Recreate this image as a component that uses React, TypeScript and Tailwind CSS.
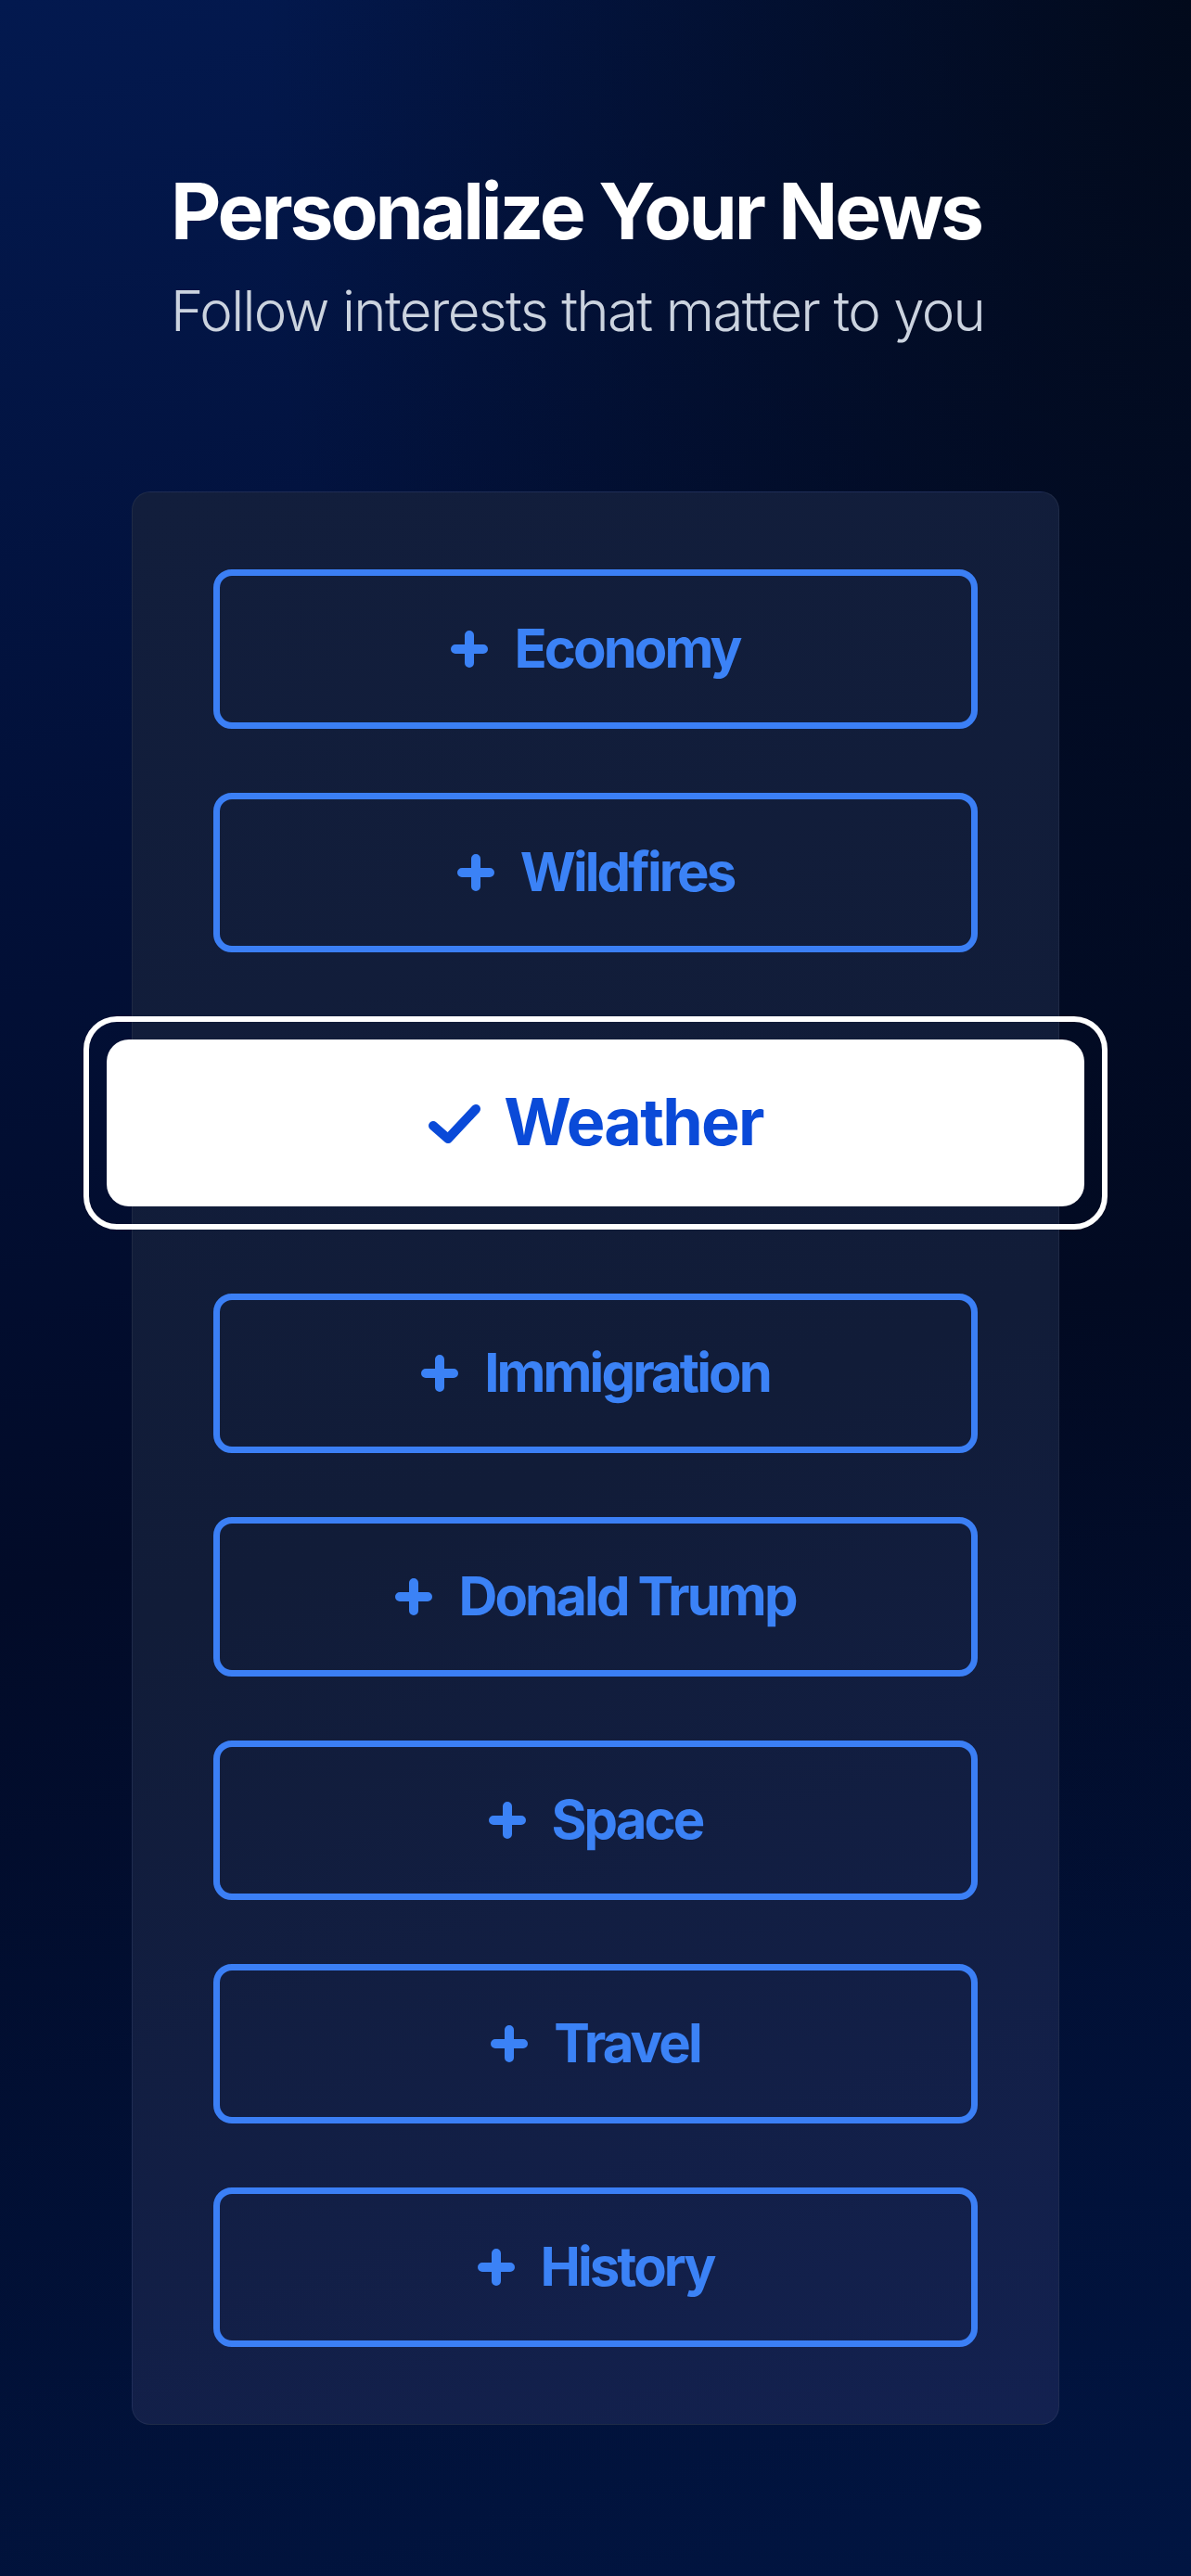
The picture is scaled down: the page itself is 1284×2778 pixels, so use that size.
import React from "react";

const topics = [
  { label: "Economy", selected: false },
  { label: "Wildfires", selected: false },
  { label: "Weather", selected: true },
  { label: "Immigration", selected: false },
  { label: "Donald Trump", selected: false },
  { label: "Space", selected: false },
  { label: "Travel", selected: false },
  { label: "History", selected: false },
];

function Plus() {
  return (
    <svg width="40" height="40" viewBox="0 0 40 40" className="shrink-0">
      <path d="M20 5 V35 M5 20 H35" stroke="#3b82f6" strokeWidth="10" strokeLinecap="round" fill="none" />
    </svg>
  );
}

function Check() {
  return (
    <svg width="58" height="46" viewBox="0 0 58 46" className="shrink-0">
      <path d="M6 26 L22 40 L52 8" stroke="#0a4ad8" strokeWidth="10" strokeLinecap="round" strokeLinejoin="round" fill="none" />
    </svg>
  );
}

function TopicButton({ label }: { label: string }) {
  return (
    <div className="w-[824px] h-[172px] rounded-[20px] border-[7px] border-[#3b7ff5] flex items-center justify-center gap-[28px] shrink-0">
      <Plus />
      <span className="text-[58px] leading-none font-bold tracking-[-0.05em] text-[#3b82f6] pb-[2px]">{label}</span>
    </div>
  );
}

function SelectedButton({ label }: { label: string }) {
  return (
    <div className="w-[1104px] h-[230px] rounded-[36px] border-[6px] border-white p-[19px] shrink-0">
      <div className="w-full h-full rounded-[24px] bg-white flex items-center justify-center gap-[24px]">
        <Check />
        <span className="text-[70px] leading-none font-bold tracking-[-0.025em] text-[#0a4ad8] pb-[2px]">{label}</span>
      </div>
    </div>
  );
}

export default function App() {
  return (
    <div
      className="relative w-full min-h-[2778px] overflow-hidden bg-[linear-gradient(165deg,#03194f_0%,#021038_30%,#020b28_55%,#011542_100%)]"
      style={{ fontFamily: "Inter, 'Noto Sans', sans-serif" }}
    >
      <div className="absolute inset-0 bg-[radial-gradient(ellipse_at_100%_0%,rgba(2,8,20,0.85)_0%,rgba(2,8,20,0)_55%)] pointer-events-none" />
      <div className="relative flex flex-col">
        <div className="pt-[186px] pl-[184px]">
          <h1 className="text-[84px] leading-none font-bold tracking-[-0.038em] text-white">Personalize Your News</h1>
          <p className="mt-[35px] text-[60px] leading-none font-light tracking-[-0.028em] text-[#cbd3df]">Follow interests that matter to you</p>
        </div>
        <div className="mt-[165px] mx-auto w-[1000px] rounded-[20px] border border-white/[0.06] bg-[linear-gradient(160deg,#121e3c_0%,#111c38_50%,#132150_100%)] pt-[83px] pb-[83px] flex flex-col items-center gap-[69px]">
          {topics.map((t) =>
            t.selected ? <SelectedButton key={t.label} label={t.label} /> : <TopicButton key={t.label} label={t.label} />
          )}
        </div>
      </div>
    </div>
  );
}
